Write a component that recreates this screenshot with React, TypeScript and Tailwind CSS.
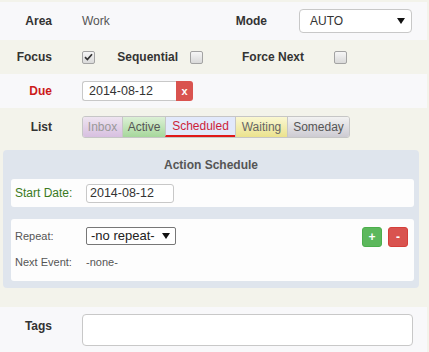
import React from "react";

function Check({ checked }: { checked?: boolean }) {
  return (
    <div className="w-[13px] h-[13px] rounded-[2px] border border-[#a3a3a3] bg-gradient-to-b from-[#f6f6f6] to-[#d9d9d9] flex items-center justify-center shrink-0">
      {checked && (
        <svg width="9" height="8" viewBox="0 0 9 8">
          <path d="M1 4.2 L3.4 6.6 L8 1.2" stroke="#333" strokeWidth="1.7" fill="none" />
        </svg>
      )}
    </div>
  );
}

function Arrow() {
  return (
    <svg width="8" height="6" viewBox="0 0 8 6">
      <path d="M0 0 L8 0 L4 6 Z" fill="#111" />
    </svg>
  );
}

export default function App() {
  return (
    <div
      className="w-[429px] h-[352px] bg-[#f3f3eb] pt-[2px] overflow-hidden text-[12px] text-[#333]"
      style={{ fontFamily: '"Liberation Sans", Arial, sans-serif' }}
    >
      {/* Row 1 */}
      <div className="w-[427px] h-[38px] bg-[#f8f8fa] flex items-center">
        <div className="w-[52px] text-right font-bold">Area</div>
        <div className="ml-[30px] w-[120px] text-[#555]">Work</div>
        <div className="w-[65px] text-right font-bold">Mode</div>
        <div className="ml-[32px] w-[113px] h-[24px] bg-white border border-[#c8c8c8] rounded-[4px] flex items-center pl-[10px] pr-[6px] text-[#333]">
          <span className="flex-1">AUTO</span>
          <Arrow />
        </div>
      </div>
      {/* Row 2 */}
      <div className="w-[427px] h-[34px] flex items-center">
        <div className="w-[52px] text-right font-bold">Focus</div>
        <div className="ml-[30px]">
          <Check checked />
        </div>
        <div className="w-[83px] text-right font-bold">Sequential</div>
        <div className="ml-[12px]">
          <Check />
        </div>
        <div className="w-[101px] text-right font-bold">Force Next</div>
        <div className="ml-[30px]">
          <Check />
        </div>
      </div>
      {/* Row 3 */}
      <div className="w-[427px] h-[34px] bg-[#f8f8fa] flex items-center">
        <div className="w-[52px] text-right font-bold text-[#cc1a1a]">Due</div>
        <div className="ml-[30px] flex">
          <div className="w-[94px] h-[20px] bg-white border border-[#c8c8c8] border-r-0 rounded-l-[3px] pl-[6px] flex items-center text-[#333] text-[12.5px]">
            2014-08-12
          </div>
          <div className="w-[17px] h-[20px] bg-[#d9534f] rounded-r-[3px] flex items-center justify-center text-white text-[11px] font-bold">
            x
          </div>
        </div>
      </div>
      {/* Row 4 */}
      <div className="w-[427px] pt-[8px] pb-[19px]">
        <div className="flex items-center h-[22px]">
          <div className="w-[52px] text-right font-bold">List</div>
          <div className="ml-[30px] flex h-[22px] border border-[#c6c6c6] rounded-[3px] overflow-hidden">
            <div className="w-[39px] flex items-center justify-center bg-gradient-to-b from-[#eee4f0] to-[#d7bfe0] text-[#999]">Inbox</div>
            <div className="w-[43px] flex items-center justify-center bg-gradient-to-b from-[#dcf0d6] to-[#a6d79b] text-[#555] border-l border-[#c6c6c6]">Active</div>
            <div className="w-[70px] flex items-center justify-center bg-[#e2e9fb] text-[#cc1f3a] border-l border-[#c6c6c6] border-b-2 border-b-[#e01818]">Scheduled</div>
            <div className="w-[52px] flex items-center justify-center bg-gradient-to-b from-[#faf7d2] to-[#ebe28c] text-[#666] border-l border-[#c6c6c6]">Waiting</div>
            <div className="w-[62px] flex items-center justify-center bg-gradient-to-b from-[#f2f2f2] to-[#cdcbd2] text-[#555] border-l border-[#c6c6c6]">Someday</div>
          </div>
        </div>
        <div className="mt-[12px] ml-[3px] w-[416px] bg-[#dfe5ed] rounded-[4px] pl-[8px] pr-[5px] pb-[7px]">
          <div className="h-[29px] flex items-center justify-center font-bold text-[#555] pr-[3px]">Action Schedule</div>
          <div className="h-[28px] bg-[#fdfdfd] rounded-[3px] flex items-center pl-[4px]">
            <div className="w-[71px] text-[#3a7a22]">Start Date:</div>
            <div className="w-[88px] h-[19px] bg-white border border-[#c8c8c8] rounded-[3px] pl-[3px] flex items-center text-[#333] text-[12.5px]">
              2014-08-12
            </div>
          </div>
          <div className="mt-[12px] h-[62px] bg-[#fdfdfd] rounded-[3px] pl-[4px] pr-[6px] pt-[8px] text-[11px] text-[#555]">
            <div className="flex items-start">
              <div className="w-[71px] h-[18px] flex items-center">Repeat:</div>
              <div className="w-[90px] h-[18px] bg-white border border-[#777] rounded-[2px] flex items-center pl-[4px] pr-[5px] text-[13px] text-[#222]">
                <span className="flex-1">-no repeat-</span>
                <Arrow />
              </div>
              <div className="ml-auto flex gap-[6px]">
                <div className="w-[20px] h-[20px] rounded-[3px] bg-[#5cb85c] border border-[#4cae4c] flex items-center justify-center text-white text-[12px] font-bold">+</div>
                <div className="w-[20px] h-[20px] rounded-[3px] bg-[#d9534f] border border-[#d43f3a] flex items-center justify-center text-white text-[12px] font-bold">-</div>
              </div>
            </div>
            <div className="flex mt-[8px] leading-[14px]">
              <div className="w-[71px]">Next Event:</div>
              <div>-none-</div>
            </div>
          </div>
        </div>
      </div>
      {/* Tags */}
      <div className="w-[427px] h-[45px] bg-[#f8f8fa] flex items-start">
        <div className="w-[52px] text-right font-bold mt-[12px] leading-[14px]">Tags</div>
        <div className="ml-[30px] mt-[7px] w-[331px] h-[32px] bg-white border border-[#c8c8c8] rounded-[4px]" />
      </div>
    </div>
  );
}
